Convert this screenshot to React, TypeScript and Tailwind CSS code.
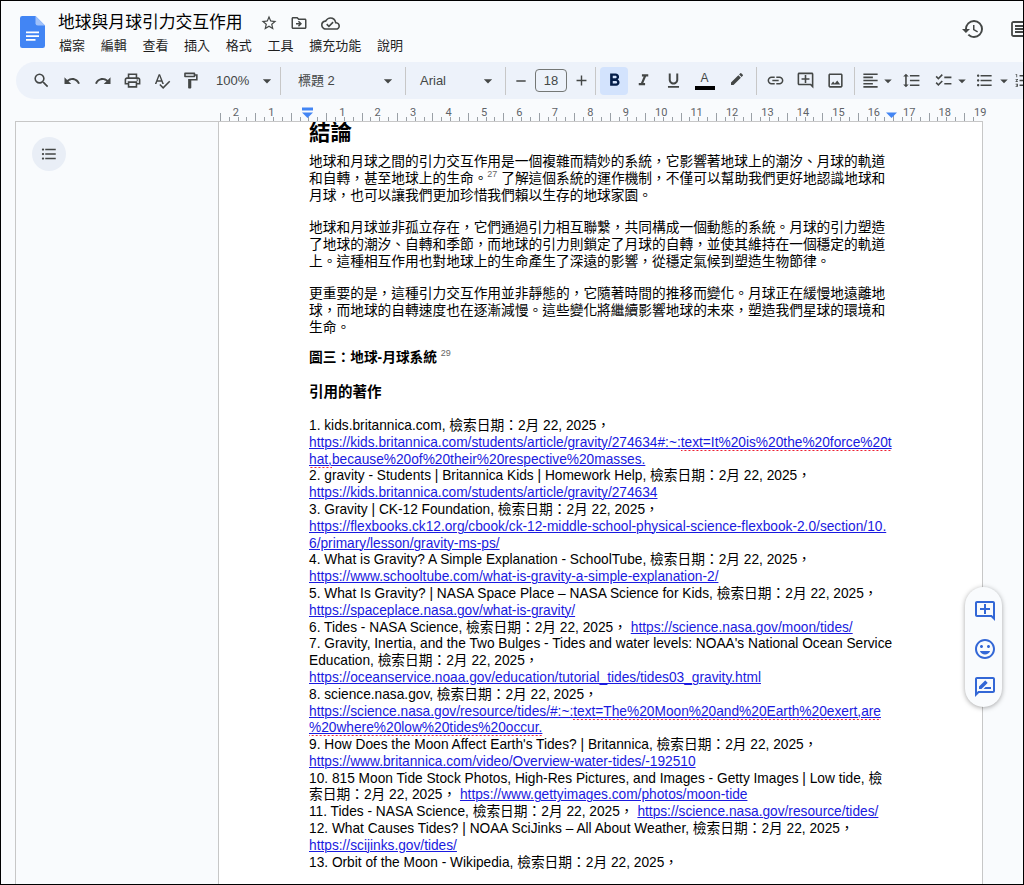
import React from "react";
import {
  MdSearch, MdUndo, MdRedo, MdOutlinePrint, MdSpellcheck, MdOutlineFormatPaint, MdArrowDropDown,
  MdRemove, MdAdd, MdFormatBold, MdFormatItalic, MdFormatUnderlined, MdEdit, MdLink, MdOutlineAddComment,
  MdOutlineInsertPhoto, MdFormatAlignLeft, MdFormatLineSpacing, MdChecklist, MdFormatListBulleted,
  MdFormatListNumbered, MdStarBorder, MdOutlineDriveFileMove, MdOutlineCloudDone, MdHistory,
  MdOutlineInsertEmoticon, MdOutlineRateReview,
} from "react-icons/md";

const FONT = "font-['Liberation_Sans','Noto_Sans_CJK_TC',sans-serif]";

function Logo() {
  return (
    <svg width="25" height="32" viewBox="0 0 25 32" className="shrink-0">
      <path d="M15.5 0H2.3A2.3 2.3 0 0 0 0 2.3v27.4A2.3 2.3 0 0 0 2.3 32h20.4a2.3 2.3 0 0 0 2.3-2.3V9.500z" fill="#4285f4" />
      <path d="M15.500 0l9.500 9.500h-7.200a2.300 2.300 0 0 1-2.300-2.300z" fill="#a1c2fa" />
      <path d="M6 15.500h13v1.700H6zM6 19.300h13V21H6zM6 23.100h9.500v1.700H6z" fill="#fff" />
    </svg>
  );
}

function Sep() {
  return <div className="h-[28px] w-px shrink-0 bg-[#c7c7c7]" />;
}

function Slot({ w, children }: { w: string; children: React.ReactNode }) {
  return <div className={`flex h-full shrink-0 items-center justify-center ${w}`}>{children}</div>;
}

function Toolbar() {
  const ic = "text-[#444746]";
  return (
    <div className="ml-[15px] flex h-[37px] w-[1040px] shrink-0 items-center overflow-hidden rounded-full bg-[#edf2fa] pl-[11px] text-[#444746]">
      <Slot w="w-[29px]"><MdSearch size={19} className={ic} /></Slot>
      <Slot w="w-[32px]"><MdUndo size={18} className={ic} /></Slot>
      <Slot w="w-[30px]"><MdRedo size={18} className={ic} /></Slot>
      <Slot w="w-[29px]"><MdOutlinePrint size={19} className={ic} /></Slot>
      <Slot w="w-[29px]"><MdSpellcheck size={18} className={ic} /></Slot>
      <Slot w="w-[29px]"><MdOutlineFormatPaint size={19} className={ic} /></Slot>
      <div className="ml-[11px] w-[48px] shrink-0 text-[13px]">100%</div>
      <MdArrowDropDown size={20} className="-ml-[7px] shrink-0" />
      <div className="w-[3px] shrink-0" />
      <Sep />
      <div className="ml-[17px] w-[80px] shrink-0 text-[13px]">標題 2</div>
      <MdArrowDropDown size={20} className="shrink-0" />
      <div className="w-[7px] shrink-0" />
      <Sep />
      <div className="ml-[14px] w-[58px] shrink-0 text-[13px]">Arial</div>
      <MdArrowDropDown size={20} className="shrink-0" />
      <div className="w-[7px] shrink-0" />
      <Sep />
      <Slot w="w-[29px]"><MdRemove size={16} /></Slot>
      <div className="flex h-[23px] w-[32px] shrink-0 items-center justify-center rounded-[4px] border border-[#747775] text-[13px]">18</div>
      <Slot w="w-[28px]"><MdAdd size={17} /></Slot>
      <Sep />
      <div className="w-[4px] shrink-0" />
      <div className="flex h-[28px] w-[28px] shrink-0 items-center justify-center rounded-[4px] bg-[#d3e3fd]">
        <MdFormatBold size={21} className="text-[#041e49]" />
      </div>
      <Slot w="w-[31px]"><MdFormatItalic size={19} /></Slot>
      <Slot w="w-[29px]"><MdFormatUnderlined size={19} /></Slot>
      <Slot w="w-[33px]">
        <div className="flex flex-col items-center">
          <span className="text-[12px] leading-[14px]">A</span>
          <div className="mt-[1px] h-[4px] w-[20px] bg-black" />
        </div>
      </Slot>
      <Slot w="w-[31px]"><MdEdit size={16} className="-mt-[3px]" /></Slot>
      <div className="w-[4px] shrink-0" />
      <Sep />
      <Slot w="w-[37px]"><MdLink size={19} /></Slot>
      <Slot w="w-[23px]"><MdOutlineAddComment size={19} /></Slot>
      <Slot w="w-[37px]"><MdOutlineInsertPhoto size={19} /></Slot>
      <Sep />
      <Slot w="w-[30px]"><MdFormatAlignLeft size={19} /></Slot>
      <MdArrowDropDown size={18} className="-ml-[6px] shrink-0" />
      <Slot w="w-[29px]"><MdFormatLineSpacing size={19} /></Slot>
      <Slot w="w-[28px]"><MdChecklist size={19} className="ml-[6px] shrink-0" /></Slot>
      <MdArrowDropDown size={18} className="-ml-[1px] shrink-0" />
      <Slot w="w-[26px]"><MdFormatListBulleted size={19} /></Slot>
      <MdArrowDropDown size={18} className="-ml-[2px] shrink-0" />
      <Slot w="w-[20px]"><MdFormatListNumbered size={19} /></Slot>
    </div>
  );
}

function Ruler() {
  const zero = 88.8;
  const step = 35.44;
  const ticks: React.ReactNode[] = [];
  for (let i = 0; i <= 85; i++) {
    const x = Math.round(1.8 + (i * step) / 4) + 0.5;
    const long = i % 4 === 0;
    ticks.push(<line key={i} x1={x} x2={x} y1={long ? 14 : 18} y2={22} stroke="#9aa0a6" strokeWidth="1" />);
  }
  const labels: React.ReactNode[] = [];
  for (let n = -2; n <= 19; n++) {
    if (n === 0) continue;
    labels.push(
      <text key={n} x={zero + n * step} y={16.500} textAnchor="middle" fontSize="11" fill="#5f6368" fontFamily="Roboto, sans-serif">
        {Math.abs(n)}
      </text>
    );
  }
  return (
    <div className="ml-[217px] h-[22px] w-[770px] shrink-0">
      <svg width="770" height="22" viewBox="0 0 770 22">
        {ticks}
        {labels}
        <path d="M84 8.500h11v3H84z" fill="#4285f4" />
        <path d="M84 13.500h11l-5.500 5.500z" fill="#4285f4" />
        <path d="M668 13.500h11l-5.500 5.500z" fill="#4285f4" />
      </svg>
    </div>
  );
}

const U = ({ children }: { children: React.ReactNode }) => (
  <span className="bg-[linear-gradient(90deg,#ef2030_50%,transparent_50%)] bg-[length:4px_1px] bg-bottom bg-repeat-x pb-[1px]">{children}</span>
);
const A = ({ children }: { children: React.ReactNode }) => (
  <span className="text-[#1a1ae0] underline decoration-1 underline-offset-[1px]">{children}</span>
);
const L = ({ children }: { children: React.ReactNode }) => <div className="h-[16.8px] whitespace-nowrap">{children}</div>;
const Sup = ({ children }: { children: React.ReactNode }) => (
  <sup className="-top-[6px] text-[9px] leading-none font-normal text-[#666]">{children}</sup>
);

function Page() {
  return (
    <div className={`h-full w-[765px] shrink-0 overflow-hidden border-x border-t border-[#c7c7c7] bg-white pl-[90px] text-[13.72px] leading-[16.8px] text-black ${FONT}`}>
      <div className="h-[22px] text-[21.500px] font-bold leading-[22px]">結論</div>
      <div className="h-[10px]" />
      <L>地球和月球之間的引力交互作用是一個複雜而精妙的系統，它影響著地球上的潮汐、月球的軌道</L>
      <L>和自轉，甚至地球上的生命。<Sup>27</Sup> 了解這個系統的運作機制，不僅可以幫助我們更好地認識地球和</L>
      <L>月球，也可以讓我們更加珍惜我們賴以生存的地球家園。</L>
      <div className="h-[15.600px]" />
      <L>地球和月球並非孤立存在，它們通過引力相互聯繫，共同構成一個動態的系統。月球的引力塑造</L>
      <L>了地球的潮汐、自轉和季節，而地球的引力則鎖定了月球的自轉，並使其維持在一個穩定的軌道</L>
      <L>上。這種相互作用也對地球上的生命產生了深遠的影響，從穩定氣候到塑造生物節律。</L>
      <div className="h-[15.600px]" />
      <L>更重要的是，這種引力交互作用並非靜態的，它隨著時間的推移而變化。月球正在緩慢地遠離地</L>
      <L>球，而地球的自轉速度也在逐漸減慢。這些變化將繼續影響地球的未來，塑造我們星球的環境和</L>
      <L>生命。</L>
      <div className="h-[14px]" />
      <L><b>圖三：地球-月球系統</b> <Sup>29</Sup></L>
      <div className="h-[16px]" />
      <div className="h-[18px] text-[14.500px] font-bold leading-[18px]">引用的著作</div>
      <div className="h-[16.800px]" />
      <L>1. kids.britannica.com, 檢索日期：2月 22, 2025，</L>
      <L><A>https://kids.britannica.com/students/article/gravity/274634#:~:<U>text=It%20is%20the%20force%20t</U></A></L>
      <L><A><U>hat,</U>because%20of%20their%20respective%20masses.</A></L>
      <L>2. gravity - Students | Britannica Kids | Homework Help, 檢索日期：2月 22, 2025，</L>
      <L><A>https://kids.britannica.com/students/article/gravity/274634</A></L>
      <L>3. Gravity | CK-12 Foundation, 檢索日期：2月 22, 2025，</L>
      <L><A>https://flexbooks.ck12.org/cbook/ck-12-middle-school-physical-science-flexbook-2.0/section/10.</A></L>
      <L><A>6/primary/lesson/gravity-ms-ps/</A></L>
      <L>4. What is Gravity? A Simple Explanation - SchoolTube, 檢索日期：2月 22, 2025，</L>
      <L><A>https://www.schooltube.com/what-is-gravity-a-simple-explanation-2/</A></L>
      <L>5. What Is Gravity? | NASA Space Place – NASA Science for Kids, 檢索日期：2月 22, 2025，</L>
      <L><A>https://spaceplace.nasa.gov/what-is-gravity/</A></L>
      <L>6. Tides - NASA Science, 檢索日期：2月 22, 2025， <A>https://science.nasa.gov/moon/tides/</A></L>
      <L>7. Gravity, Inertia, and the Two Bulges - Tides and water levels: NOAA&apos;s National Ocean Service</L>
      <L>Education, 檢索日期：2月 22, 2025，</L>
      <L><A>https://oceanservice.noaa.gov/education/tutorial_tides/tides03_gravity.html</A></L>
      <L>8. science.nasa.gov, 檢索日期：2月 22, 2025，</L>
      <L><A>https://science.nasa.gov/resource/tides/#:~:<U>text=The%20Moon%20and%20Earth%20exert,are</U></A></L>
      <L><A><U>%20where%20low%20tides%20occur.</U></A></L>
      <L>9. How Does the Moon Affect Earth&apos;s Tides? | Britannica, 檢索日期：2月 22, 2025，</L>
      <L><A>https://www.britannica.com/video/Overview-water-tides/-192510</A></L>
      <L>10. 815 Moon Tide Stock Photos, High-Res Pictures, and Images - Getty Images | Low tide, 檢</L>
      <L>索日期：2月 22, 2025， <A>https://www.gettyimages.com/photos/moon-tide</A></L>
      <L>11. Tides - NASA Science, 檢索日期：2月 22, 2025， <A>https://science.nasa.gov/resource/tides/</A></L>
      <L>12. What Causes Tides? | NOAA SciJinks – All About Weather, 檢索日期：2月 22, 2025，</L>
      <L><A>https://scijinks.gov/tides/</A></L>
      <L>13. Orbit of the Moon - Wikipedia, 檢索日期：2月 22, 2025，</L>
    </div>
  );
}

export default function App() {
  const menu = ["檔案", "編輯", "查看", "插入", "格式", "工具", "擴充功能", "說明"];
  return (
    <div className={`relative flex h-[885px] w-[1024px] flex-col overflow-hidden border border-black bg-[#f9fbfd] ${FONT}`}>
      <header className="flex h-[61px] shrink-0 items-start pl-[19px] pt-[15px]">
        <Logo />
        <div className="ml-[13px] -mt-[8px] flex flex-col">
          <div className="flex h-[30px] items-center text-[16.800px] text-black">
            <span>地球與月球引力交互作用</span>
            <MdStarBorder size={18} className="ml-[17px] text-[#444746]" />
            <MdOutlineDriveFileMove size={18} className="ml-[12px] text-[#444746]" />
            <MdOutlineCloudDone size={19} className="ml-[13px] text-[#444746]" />
          </div>
          <div className="-mt-[2px] flex gap-[15.700px] pl-[1px] text-[13px] leading-[20px] text-[#1f1f1f]">
            {menu.map((m) => <span key={m}>{m}</span>)}
          </div>
        </div>
        <div className="ml-auto -mr-[8px] flex items-center gap-[26px] text-[#444746]">
          <MdHistory size={24} className="mt-[1px]" />
          <svg width="20" height="16" viewBox="0 0 20 16" fill="none" stroke="#444746" strokeWidth="1.800">
            <rect x="1" y="1" width="18" height="14" rx="1.500" />
            <path d="M4 5h12M4 8h12M4 11h12" />
          </svg>
        </div>
      </header>
      <Toolbar />
      <Ruler />
      <div className="flex min-h-0 flex-1">
        <div className="ml-[14px] w-[203px] shrink-0 border-l border-t border-[#c7c7c7] pl-[16px] pt-[15px]">
          <div className="flex h-[34px] w-[34px] items-center justify-center rounded-full bg-[#e9eef6] text-[#444746]">
            <MdFormatListBulleted size={18} />
          </div>
        </div>
        <Page />
      </div>
      <div className="absolute left-[964px] top-[586px] flex h-[120px] w-[37px] flex-col items-center justify-center gap-[14px] rounded-full bg-[#f9fbfd] pl-[2px] pt-[4px] text-[#3367d6] shadow-[0_1px_5px_rgba(0,0,0,0.35)]">
        <MdOutlineAddComment size={24} />
        <MdOutlineInsertEmoticon size={24} />
        <MdOutlineRateReview size={24} />
      </div>
    </div>
  );
}
